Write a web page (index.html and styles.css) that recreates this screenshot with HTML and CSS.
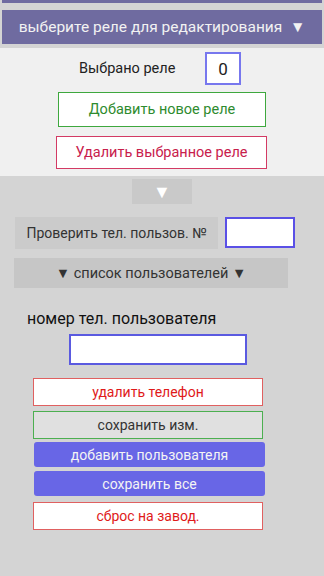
FILE: index.html
```html
<!DOCTYPE html>
<html lang="ru">
<head>
    <meta charset="UTF-8">
    <meta name="viewport" content="width=device-width, initial-scale=1.0">
    <title>Реле</title>
    <link rel="stylesheet" href="styles.css">
</head>
<body>
    <div class="top-strip"></div>
    <div class="relay-select">выберите реле для редактирования &nbsp;&#9660;</div>

    <div class="relay-panel">
        <div class="relay-row">
            <span class="relay-label">Выбрано реле</span>
            <div class="relay-num">0</div>
        </div>
        <button class="btn-add-relay">Добавить новое реле</button>
        <button class="btn-del-relay">Удалить выбранное реле</button>
    </div>

    <div class="users">
        <button class="btn-toggle">&#9660;</button>
        <div class="check-row">
            <button class="btn-check">Проверить тел. пользов. №</button>
            <input class="check-input" type="text">
        </div>
        <button class="btn-list">&#9660; список пользователей &#9660;</button>

        <p class="phone-label">номер тел. пользователя</p>
        <input class="phone-input" type="text">

        <div class="actions">
            <button class="btn-outline red">удалить телефон</button>
            <button class="btn-outline green">сохранить изм.</button>
            <button class="btn-fill">добавить пользователя</button>
            <button class="btn-fill">сохранить все</button>
            <button class="btn-outline red">сброс на завод.</button>
        </div>
    </div>
</body>
</html>
```

FILE: styles.css
```css
body {
    margin: 0;
    font-family: Roboto, "Noto Sans", sans-serif;
    background-color: #d4d4d4;
    height: 100vh;
}

button, input {
    font-family: inherit;
    box-sizing: border-box;
    padding: 0;
    white-space: nowrap;
}

.top-strip {
    height: 3px;
    margin: 0 2px;
    background: #6f6ba0;
}

.relay-select {
    margin: 7px 2px 0;
    height: 34px;
    line-height: 34px;
    background: #6f6ba0;
    color: #f2f2f2;
    font-size: 15.5px;
    text-align: center;
}

.relay-panel {
    margin-top: 4px;
    background: #f0f0f0;
    height: 128px;
    box-sizing: border-box;
    padding-top: 4px;
    display: flex;
    flex-direction: column;
    align-items: center;
}

.relay-row {
    display: flex;
    align-items: center;
    margin-right: 4px;
}

.relay-label {
    font-size: 14.5px;
    color: #222;
    width: 126px;
}

.relay-num {
    width: 36px;
    height: 33px;
    box-sizing: border-box;
    border: 2px solid #7777ee;
    background: #fff;
    font-size: 17px;
    color: #222;
    display: flex;
    align-items: center;
    justify-content: center;
}

.btn-add-relay, .btn-del-relay {
    background: #fff;
    font-size: 14.5px;
}

.btn-add-relay {
    margin-top: 7px;
    width: 208px;
    height: 35px;
    border: 1px solid #3ea83e;
    color: #2e8b2e;
}

.btn-del-relay {
    margin: 9px 1px 0 0;
    width: 211px;
    height: 33px;
    border: 1px solid #d33a64;
    color: #c8204c;
}

.users {
    display: flex;
    flex-direction: column;
    align-items: flex-start;
}

.btn-toggle {
    align-self: center;
    margin-top: 3px;
    width: 60px;
    height: 25px;
    border: none;
    background: #c9c9c9;
    color: #fff;
    font-size: 18px;
    line-height: 25px;
}

.check-row {
    display: flex;
    align-items: flex-start;
    margin: 13px 0 0 15px;
    gap: 7px;
}

.btn-check {
    width: 203px;
    height: 32px;
    border: none;
    background: #cbcbcb;
    color: #333;
    font-size: 14px;
}

.check-input, .phone-input {
    border: 2px solid #5a50e6;
    background: #fff;
    outline: none;
}

.check-input {
    width: 70px;
    height: 31px;
}

.btn-list {
    margin: 9px 0 0 14px;
    width: 274px;
    height: 30px;
    border: none;
    background: #c6c6c6;
    color: #333;
    font-size: 14.5px;
}

.phone-label {
    margin: 21px 0 0 27px;
    font-size: 16px;
    color: #111;
}

.phone-input {
    margin: 6px 0 0 69px;
    width: 178px;
    height: 31px;
    border-color: #5a5ae0;
}

.actions {
    margin: 13px 0 0 33px;
    display: flex;
    flex-direction: column;
    gap: 5px;
}

.btn-outline, .btn-fill {
    width: 230px;
    height: 28px;
    font-size: 14px;
}

.btn-outline.red {
    background: #fff;
    border: 1px solid #e06060;
    color: #e01a1a;
}

.btn-outline.green {
    background: #e0e0e0;
    border: 1px solid #4caf50;
    color: #333;
}

.btn-fill {
    width: 231px;
    height: 25px;
    margin: -2px 0 0 1px;
    border: none;
    border-radius: 3px;
    background: #6866e6;
    color: #f4f4f4;
}

.btn-fill + .btn-fill {
    margin-top: -1px;
}

.btn-fill + .btn-outline {
    margin-top: 1px;
}
```
